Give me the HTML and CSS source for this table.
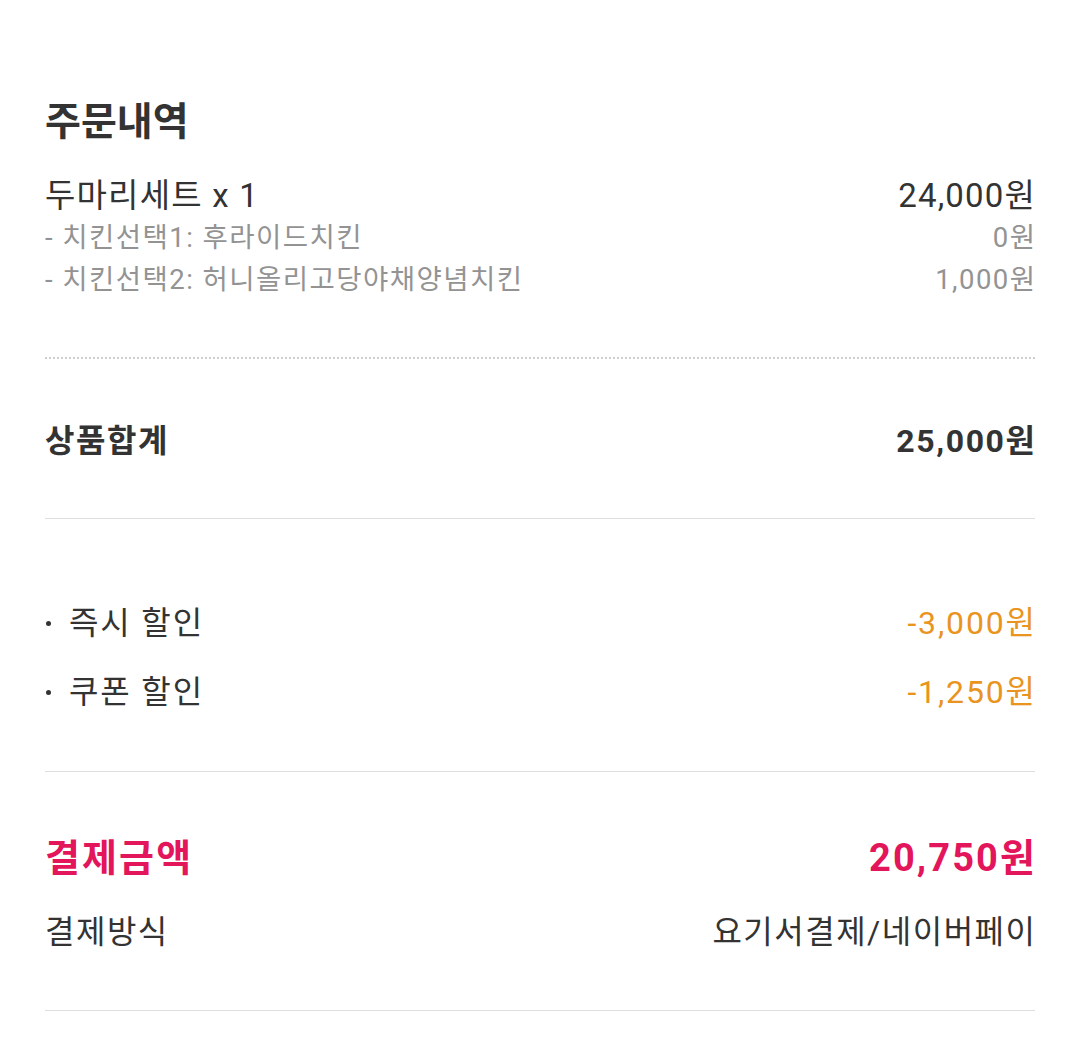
FILE: index.html
```html
<!DOCTYPE html>
<html lang="ko">
<head>
<meta charset="utf-8">
<link rel="stylesheet" href="styles.css">
</head>
<body>
<div class="page">
  <section class="sec sec-order">
    <h2 class="title">주문내역</h2>
    <div class="row item"><span>두마리세트 x 1</span><span>24,000원</span></div>
    <div class="row sub"><span>- 치킨선택1: 후라이드치킨</span><span>0원</span></div>
    <div class="row sub"><span>- 치킨선택2: 허니올리고당야채양념치킨</span><span>1,000원</span></div>
  </section>
  <div class="dotted"></div>
  <section class="sec sec-sum">
    <div class="row total"><span>상품합계</span><span>25,000원</span></div>
  </section>
  <div class="line"></div>
  <section class="sec sec-disc">
    <div class="row disc"><span class="bul">즉시 할인</span><span class="neg">-3,000원</span></div>
    <div class="row disc"><span class="bul">쿠폰 할인</span><span class="neg">-1,250원</span></div>
  </section>
  <div class="line"></div>
  <section class="sec sec-pay">
    <div class="row pay"><span>결제금액</span><span>20,750원</span></div>
    <div class="row method"><span>결제방식</span><span>요기서결제/네이버페이</span></div>
  </section>
  <div class="line"></div>
</div>
</body>
</html>
```
FILE: styles.css
```css
html, body {
  margin: 0;
  padding: 0;
  background: #fff;
}
body {
  font-family: Roboto, "Noto Sans CJK KR", sans-serif;
  color: #333;
}
.page {
  padding: 98px 45px 0;
}
.sec { display: flex; flex-direction: column; }
.title {
  margin: 0;
  font-size: 39px;
  line-height: 48px;
  font-weight: 700;
  color: #333;
}
.row {
  --ls: 0px;
  display: flex;
  justify-content: space-between;
  align-items: center;
  letter-spacing: var(--ls);
}
.row > span:last-child {
  margin-right: calc(-1 * var(--ls));
}
.item {
  --ls: 1.2px;
  margin-top: 29px;
  font-size: 33px;
  line-height: 42px;
  color: #333;
}
.sub {
  --ls: 1.45px;
  font-size: 27.5px;
  line-height: 42px;
  color: #939393;
}
.dotted {
  margin-top: 56px;
  height: 0;
  border-top: 2px dotted #cfcfcf;
}
.sec-sum { padding: 58px 0 53px; }
.total {
  --ls: 1.6px;
  font-size: 32px;
  line-height: 48px;
  font-weight: 700;
  color: #333;
}
.line {
  height: 1px;
  background: #dedede;
}
.sec-disc { padding: 83px 0 58px; gap: 27px; }
.disc {
  --ls: 1.85px;
  height: 42px;
  font-size: 32px;
  line-height: 42px;
  color: #333;
}
.bul {
  display: flex;
  align-items: center;
}
.bul::before {
  content: "";
  width: 5px;
  height: 5px;
  margin: 0 18px 0 1px;
  border-radius: 50%;
  background: #333;
}
.neg { color: #e9941e; }
.sec-pay { padding: 62px 0 57px; }
.pay {
  --ls: 2.1px;
  font-size: 38px;
  line-height: 48px;
  font-weight: 700;
  color: #e3155b;
}
.method {
  --ls: 1.5px;
  margin-top: 29px;
  font-size: 32px;
  line-height: 42px;
  color: #333;
}
```
